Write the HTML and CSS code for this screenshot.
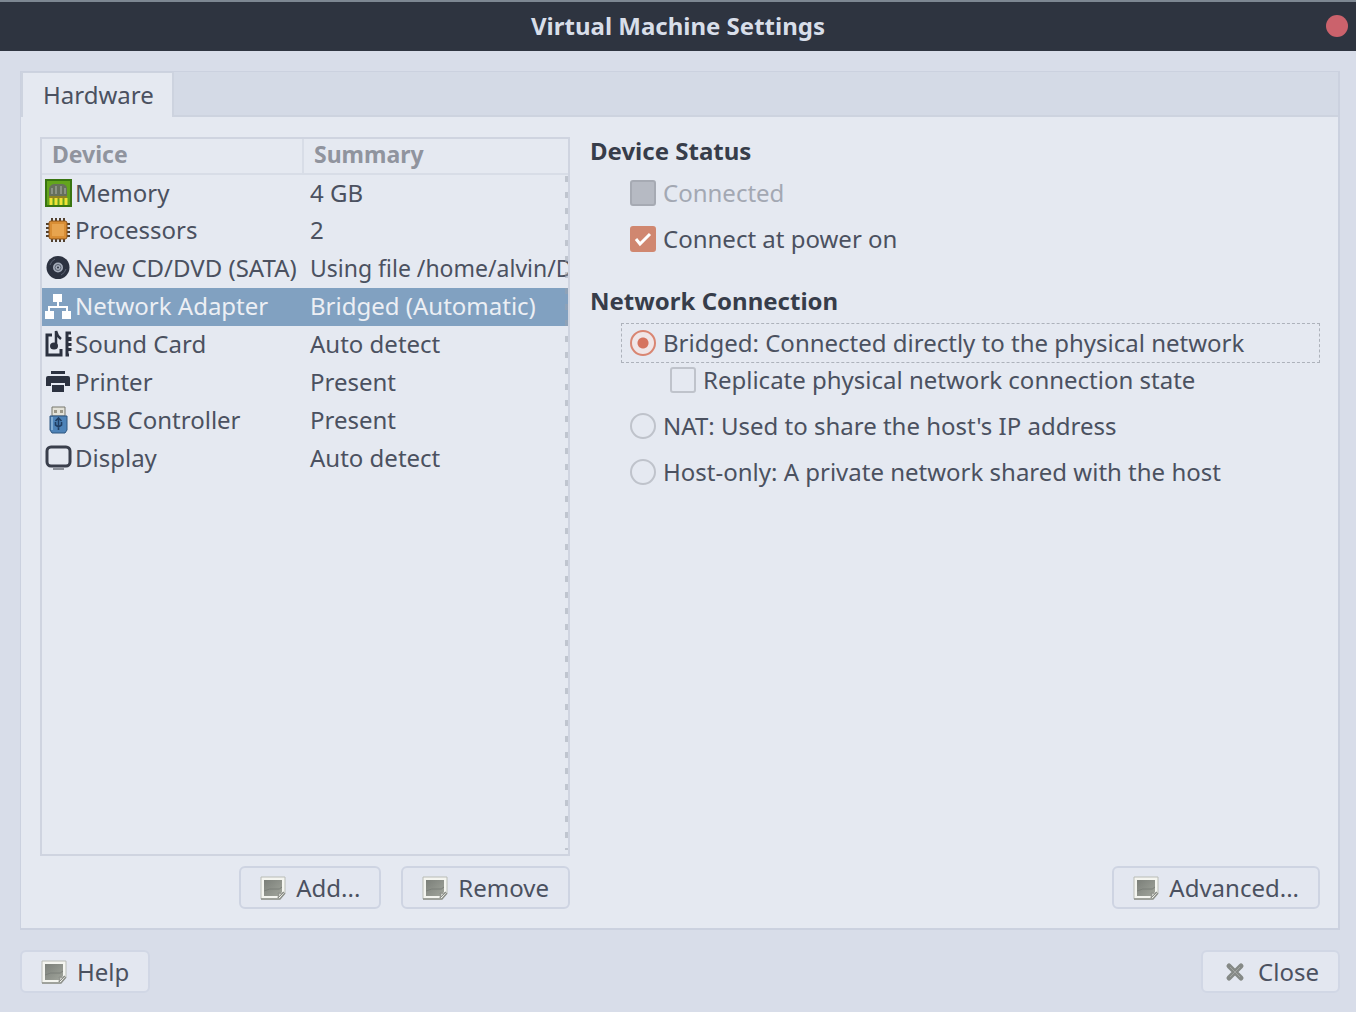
FILE: index.html
```html
<!DOCTYPE html>
<html lang="en">
<head>
<meta charset="utf-8">
<title>Virtual Machine Settings</title>
<link rel="stylesheet" href="styles.css">
</head>
<body>
<svg class="defs" aria-hidden="true">
  <linearGradient id="page-fill" x2="1" y2="1"><stop offset="0" stop-color="#7b7f79"/><stop offset="1" stop-color="#a1a59c"/></linearGradient>
  <symbol id="icon-image" viewBox="0 0 26 24">
    <path d="M1 1h24v16l-5 6H1z" fill="#f4f5f0" stroke="#b9bcb6" stroke-width="1"/>
    <path d="M1 23h19l5-6" fill="none" stroke="#8e918b" stroke-width="1.5"/>
    <path d="M4 4h18v12l-4 4H4z" fill="url(#page-fill)"/>
    <path d="M4 15q6-3 11-2t7-2" fill="none" stroke="#7b7f79" stroke-width="1"/>
    <path d="M18 22q1-4 0-5 4 1 6-1z" fill="#c9cbc5" stroke="#8a8d87" stroke-width="1"/>
  </symbol>
</svg>
<div class="window">
  <header class="titlebar">
    <h1 class="title">Virtual Machine Settings</h1>
    <button class="window-close" type="button" aria-label="Close window"></button>
  </header>
  <main class="content">
    <section class="notebook">
      <div class="tabs" role="tablist"><button class="tab" type="button" role="tab" aria-selected="true">Hardware</button></div>
      <div class="panel" role="tabpanel">
        <div class="devices">
          <div class="tree">
            <table class="device-table">
              <thead><tr><th class="col-device">Device</th><th>Summary</th></tr></thead>
              <tbody>
                <tr><td><span class="device"><svg class="icon" viewBox="0 0 28 28"><rect x="2" y="1" width="25" height="26" fill="#63a51c" stroke="#397511" stroke-width="2"/><path d="M5 17V10q1-5 6-5h8q4 1 4 5v7z" fill="#66705c"/><path d="M8 15V9m4 6V7m5 8V7m4 8V9" stroke="#8b9284" stroke-width="2"/><path d="M5 17h18v3H5z" fill="#8f8420"/><path d="M7 26v-7m5 7v-7m5 7v-7m5 7v-7" stroke="#f1e337" stroke-width="3"/></svg>Memory</span></td><td>4 GB</td></tr>
                <tr><td><span class="device"><svg class="icon" viewBox="0 0 28 28"><path d="M8 2v24m4-24v24m4-24v24m4-24v24M2 8h24M2 12h24M2 16h24M2 20h24" stroke="#51402e" stroke-width="2"/><rect x="5" y="5" width="18" height="18" rx="2" fill="#d98e35" stroke="#8f5519"/><rect x="8" y="8" width="12" height="12" fill="#e7a44f"/></svg>Processors</span></td><td>2</td></tr>
                <tr><td><span class="device"><svg class="icon" viewBox="0 0 28 28"><circle cx="14" cy="13.5" r="11.5" fill="#2c3240"/><circle cx="14" cy="13.5" r="5" fill="#a6adba"/><circle cx="14" cy="13.5" r="3" fill="none" stroke="#596170" stroke-width="1"/><circle cx="14" cy="13.5" r="1" fill="#2c3240"/><path d="M6 11q1-4 5-6m11 10q-1 4-5 6" fill="none" stroke="#596170" stroke-width="1"/></svg>New CD/DVD (SATA)</span></td><td class="path">Using file /home/alvin/D</td></tr>
                <tr class="selected" aria-selected="true"><td><span class="device"><svg class="icon" viewBox="0 0 28 28"><path d="M9 2h9v8H9zM1 19h9v8H1zM18 19h9v8h-9z" fill="#fff"/><path d="M14 9v6M5 20v-5h18v5" fill="none" stroke="#fff" stroke-width="2"/></svg>Network Adapter</span></td><td>Bridged (Automatic)</td></tr>
                <tr><td><span class="device"><svg class="icon" viewBox="0 0 28 28"><path d="M8 5H3v20h14v-6" fill="none" stroke="#2c3240" stroke-width="3"/><path d="M12 17V1q1 5 5 8" fill="none" stroke="#2c3240" stroke-width="2.5"/><ellipse cx="10" cy="16" rx="4" ry="3.5" fill="#2c3240"/><path d="M27 3h-4v22h2" fill="none" stroke="#2c3240" stroke-width="3"/><path d="M25.500 7v4m0 2v3m0 2v3" stroke="#2c3240" stroke-width="4"/></svg>Sound Card</span></td><td>Auto detect</td></tr>
                <tr><td><span class="device"><svg class="icon" viewBox="0 0 28 28"><path d="M7 3h14v3H7zM4 8h20q2 0 2 2v8h-5v-3H7v3H2v-8q0-2 2-2zM8 17h12v7H8z" fill="#2c3240"/></svg>Printer</span></td><td>Present</td></tr>
                <tr><td><span class="device"><svg class="icon" viewBox="0 0 28 28"><path d="M8 1h13v9H8z" fill="#e3e2d9" stroke="#77766d"/><path d="M10 4h3v3h-3zm6 0h3v3h-3z" fill="#9b9788"/><path d="M6 10h17v14l-2 3H8l-2-3z" fill="#4e83b8" stroke="#2e5680"/><path d="M8 11v13" stroke="#83add3" stroke-width="2"/><path d="M14.500 24V13m-3 2 3-3 3 3m-6 1v3l3 2 3-2v-3" fill="none" stroke="#203e63" stroke-width="1.6"/></svg>USB Controller</span></td><td>Present</td></tr>
                <tr><td><span class="device"><svg class="icon" viewBox="0 0 28 28"><rect x="3" y="3" width="23" height="19" rx="4" fill="none" stroke="#3a3f4c" stroke-width="3"/><path d="M9 25h11" stroke="#8b9099" stroke-width="2"/></svg>Display</span></td><td>Auto detect</td></tr>
              </tbody>
            </table>
          </div>
          <div class="actions">
            <button class="button" type="button"><svg class="button-icon"><use href="#icon-image"/></svg>Add...</button>
            <button class="button" type="button"><svg class="button-icon"><use href="#icon-image"/></svg>Remove</button>
          </div>
        </div>
        <div class="details">
          <h2 class="heading">Device Status</h2>
          <div class="options status">
            <label class="option disabled"><input class="check" type="checkbox" disabled>Connected</label>
            <label class="option"><input class="check" type="checkbox" checked>Connect at power on</label>
          </div>
          <h2 class="heading">Network Connection</h2>
          <div class="options">
            <label class="option focused"><input class="check radio" type="radio" name="network" checked>Bridged: Connected directly to the physical network</label>
            <label class="option nested"><input class="check" type="checkbox">Replicate physical network connection state</label>
            <label class="option"><input class="check radio" type="radio" name="network">NAT: Used to share the host's IP address</label>
            <label class="option"><input class="check radio" type="radio" name="network">Host-only: A private network shared with the host</label>
          </div>
          <div class="actions bottom">
            <button class="button" type="button"><svg class="button-icon"><use href="#icon-image"/></svg>Advanced...</button>
          </div>
        </div>
      </div>
    </section>
    <footer class="footer">
      <button class="button plain" type="button"><svg class="button-icon"><use href="#icon-image"/></svg>Help</button>
      <button class="button plain" type="button"><svg class="button-icon" viewBox="0 0 26 24"><path d="M7 6l12 12M19 6L7 18" stroke="#858986" stroke-width="5" stroke-linecap="round"/><path d="M8 7l10 10M18 7L8 17" stroke="#a0a3a0" stroke-width="1"/></svg>Close</button>
    </footer>
  </main>
</div>
</body>
</html>
```
FILE: styles.css
```css
* { box-sizing: border-box; }
body {
  margin: 0;
  background: #d8dde9;
  color: #4b5160;
  font: 24px/36px "Noto Sans", sans-serif;
}
.defs { position: absolute; width: 0; height: 0; }
button { font: inherit; color: inherit; }
.window { display: flex; flex-direction: column; min-height: 100vh; }
.titlebar {
  display: grid;
  grid-template-columns: 1fr auto 1fr;
  align-items: center;
  height: 51px;
  padding: 0 8px 2px;
  border-top: 2px solid #7d8792;
  background: #2e3440;
}
.title {
  grid-column: 2;
  margin: 0;
  color: #d8dee9;
  font-size: 24px;
  line-height: 46px;
}
.window-close {
  justify-self: end;
  width: 22px;
  height: 22px;
  padding: 0;
  border: 0;
  border-radius: 50%;
  background: #cb626c;
}
.content { display: flex; flex: 1; flex-direction: column; gap: 20px; padding: 20px 16px 19px 20px; }
.notebook { display: flex; flex: 1; flex-direction: column; border: 1px solid #cbd1df; border-width: 1px 2px 2px 1px; }
.tabs { display: flex; height: 45px; border-bottom: 2px solid #cdd3df; background: #d4dae6; }
.tab {
  height: 45px;
  padding: 0 18px 0 20px;
  border: solid #cdd3df;
  border-width: 1px 2px 0;
  background: #e5e9f1;
}
.panel { display: flex; flex: 1; gap: 20px; padding: 20px 18px 19px 19px; background: #e5e9f1; }
.devices { display: flex; flex: 0 1 530px; flex-direction: column; gap: 10px; min-width: 0; }
.tree { position: relative; flex: 1; overflow: hidden; border: 2px solid #cfd4e0; }
.tree::after {
  content: "";
  position: absolute;
  top: 30px;
  right: 0;
  bottom: 4px;
  width: 3px;
  background: repeating-linear-gradient(transparent 0 7px, #9ba2ae80 7px 13px, transparent 13px 16px);
}
.device-table { width: 100%; border-collapse: collapse; table-layout: fixed; }
.device-table th {
  height: 35px;
  padding: 0 10px;
  border-bottom: 2px solid #d8dde7;
  color: #90949e;
  font-size: 23px;
  line-height: 30px;
  text-align: left;
  vertical-align: top;
}
.device-table .col-device { width: 261px; border-right: 2px solid #d8dde7; }
.device-table td { height: 38px; padding: 0 0 0 7px; overflow: hidden; vertical-align: top; white-space: nowrap; }
.device-table td:first-child { padding-left: 2px; }
.device-table .path { font-size: 23px; }
.device { display: flex; align-items: center; gap: 3px; }
.icon { flex: none; width: 28px; height: 28px; }
.selected { background: #81a1c1; color: #eceff4; }
.actions { display: flex; justify-content: flex-end; gap: 20px; }
.bottom { margin-top: auto; }
.button {
  display: flex;
  align-items: center;
  gap: 10px;
  height: 43px;
  padding: 0 19px;
  border: 2px solid #ced4e2;
  border-radius: 6px;
  background: #e3e7f0;
}
.button-icon { width: 26px; height: 24px; }
.plain { border-color: #d1d7e5; }
.footer { display: flex; justify-content: space-between; }
.details { display: flex; flex: 1 0 auto; flex-direction: column; }
.heading { margin: 0; color: #373d4a; font-size: 24px; line-height: 28px; }
.options { display: flex; flex-direction: column; gap: 6px; padding-left: 31px; }
.status { margin-bottom: 28px; padding-top: 8px; }
.option { display: flex; align-items: center; gap: 7px; height: 40px; padding-left: 8px; border: 1px solid transparent; white-space: nowrap; }
.focused { margin-top: 8px; border: 1px dashed #adb2bb; }
.nested { margin: -9px 0 0 40px; }
.disabled { color: #a3a8b3; }
.check {
  appearance: none;
  flex: none;
  width: 26px;
  height: 26px;
  margin: 0;
  border: 2px solid #bfc3cb;
  border-radius: 3px;
}
.check:disabled { border-color: #a6aab3; background: #b6bac3; }
.check:checked {
  border-color: #d08770;
  background: #d08770 url("data:image/svg+xml,%3Csvg xmlns='http://www.w3.org/2000/svg' viewBox='0 0 22 22'%3E%3Cpath d='M4 11l4 5L18 6' fill='none' stroke='%23fff' stroke-width='3'/%3E%3C/svg%3E") center / 22px no-repeat;
}
.radio { border-radius: 50%; }
.radio:checked { border-color: #d98672; background: radial-gradient(circle, #d5745f 0 5px, #f0e6e7 6px); }
```
